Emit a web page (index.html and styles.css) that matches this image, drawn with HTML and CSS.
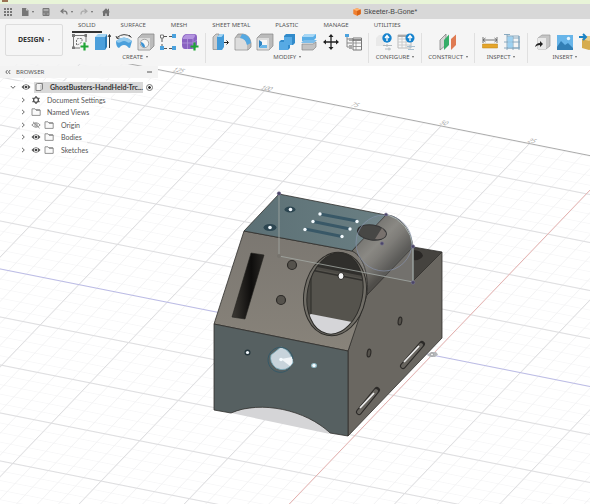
FILE: index.html
```html
<!DOCTYPE html>
<html lang="en">
<head>
  <meta charset="UTF-8">
  <meta name="viewport" content="width=device-width, initial-scale=1.0">
  <title>Skeeter-B-Gone*</title>
  <link rel="stylesheet" href="styles.css">
</head>
<body>
  <svg class="defs" aria-hidden="true">
    <symbol id="eye" viewBox="0 0 10 8">
      <path d="M.5 4Q5-1.500 9.500 4Q5 9.500 .5 4z" fill="#555"/>
      <circle cx="5" cy="4" r="2.200" fill="#eee"/>
      <circle cx="5" cy="4" r="1.300" fill="#444"/>
    </symbol>
    <symbol id="eye-off" viewBox="0 0 10 8">
      <path d="M.8 4Q5-.5 9.200 4Q5 8.500 .8 4zM2 .8L8.500 7.200" fill="none" stroke="#888" stroke-width=".9"/>
      <circle cx="5" cy="4" r="1.300" fill="none" stroke="#888" stroke-width=".8"/>
    </symbol>
    <symbol id="folder" viewBox="0 0 10 8">
      <path d="M1 7.400V.8H4L5 2H9.200V7.400z" fill="#fafafa" stroke="#888" stroke-width=".9"/>
      <path d="M5 2H9" stroke="#777"/>
    </symbol>
    <symbol id="chevron" viewBox="0 0 6 6">
      <path d="M2 .8L4.300 3L2 5.200" fill="none" stroke="#555" stroke-width=".9"/>
    </symbol>
  </svg>

  <div class="backdrop"></div>

  <header class="titlebar">
    <div class="quick">
      <button aria-label="Data panel"><svg viewBox="0 0 8 8"><path d="M1 0V8M4 0V8M7 0V8" stroke="#777" stroke-width="2" stroke-dasharray="2 1"/></svg></button>
      <button class="file" aria-label="File"><svg viewBox="0 0 8 8"><path d="M1 0H5L7.500 2.500V8H1z" fill="#777"/><path d="M5 0V2.500H7.500" fill="#ccc"/></svg><i class="caret"></i></button>
      <button class="save" aria-label="Save"><svg viewBox="0 0 8 8"><path d="M1 .5H7V7.500H1z" fill="#aaa" stroke="#777"/><path d="M1 4H7M2.500 6H5.500" stroke="#777" stroke-width="1.500"/></svg></button>
      <button class="undo" aria-label="Undo"><svg viewBox="0 0 8 8"><path d="M3.500 1L1 3.200L3.500 5.400M1 3.200H5Q7 3.500 7 6.500" fill="none" stroke="#777" stroke-width="1.200"/></svg><i class="caret"></i></button>
      <button class="redo" aria-label="Redo"><svg viewBox="0 0 8 8"><path d="M4.500 1L7 3.200L4.500 5.400M7 3.200H3Q1 3.500 1 6.500" fill="none" stroke="#aaa" stroke-width="1.200"/></svg><i class="caret"></i></button>
      <button class="home" aria-label="Home"><svg viewBox="0 0 8 8"><path d="M0 4.300L4 .3L8 4.300H7V8H1V4.300zM6 .8H7V3H6z" fill="#707070"/><path d="M3.300 5.500H4.700V8H3.300z" fill="#d4d4d4"/></svg></button>
    </div>
    <div class="doc">
      <svg viewBox="0 0 8 8"><path d="M.3 1.500L4 .2L7.700 1.500V6L4 7.800L.3 6z" fill="#f08030"/><path d="M.3 1.500L4 3L7.700 1.500L4 .2z" fill="#ffb470"/><path d="M4 3L7.700 1.500V6L4 7.800z" fill="#d96314"/></svg>
      <span>Skeeter-B-Gone*</span>
    </div>
  </header>

  <div class="toolbar">
    <button class="workspace">DESIGN <i class="caret"></i></button>
    <div class="ribbon">
      <nav class="tabs">
        <a href="#" class="active">SOLID</a>
        <a href="#">SURFACE</a>
        <a href="#">MESH</a>
        <a href="#">SHEET METAL</a>
        <a href="#">PLASTIC</a>
        <a href="#">MANAGE</a>
        <a href="#">UTILITIES</a>
      </nav>
      <div class="groups">
        <div class="group">
          <div class="tools">
            <button aria-label="Create sketch"><svg viewBox="0 0 18 18"><path d="M2 2.500H15M2.500 2V15M15 2V9M2 15H9" fill="none" stroke="#777"/><path d="M5.500 12V6.500L7 5.500H11V8Q10 11 5.500 12z" fill="none" stroke="#777" stroke-dasharray="2 1"/><path d="M1 1H4V4H1zM13.500 1H16V4H13.500zM1 13.500H4V16H1z" fill="#777"/><path d="M13.500 9.500V17.500M9.500 13.500H17.500" stroke="#20a535" stroke-width="2.200"/></svg></button>
            <button aria-label="Extrude"><svg viewBox="0 0 18 18"><path d="M2 4L5 1H14L12 4z" fill="#a5d5f3"/><path d="M2 4H12V17H2z" fill="#4c9fdb"/><path d="M12 4L14 1V14L12 17z" fill="#287bb8"/><path d="M16.500 15V2M15 4L16.500 1.500L18 4" fill="none" stroke="#333"/></svg></button>
            <button aria-label="Revolve"><svg viewBox="0 0 18 18"><path d="M1 8Q9 1 17 8L15 15Q13 15 12 13Q9 11 6 13L4 15Q1 14 1 8z" fill="#4ba0dc"/><path d="M1 8Q9 1 17 8Q14 11 12 9Q9 7 6 9Q3 11 1 8z" fill="#94cbee"/><path d="M2 4.500Q9-1 16 4" fill="none" stroke="#444"/><path d="M1 3L2 5.500L4.500 5M14 2L16.500 4.500" fill="none" stroke="#444"/></svg></button>
            <button aria-label="Hole"><svg viewBox="0 0 18 18"><path d="M1 5L5 1H17V13L13 17H1z" fill="#bbb" stroke="#888" stroke-width=".8"/><path d="M1.500 5H13V16.500H1.500z" fill="#ddd"/><circle cx="7.500" cy="10.500" r="4.200" fill="#f5f5f5" stroke="#888" stroke-width=".7"/><path d="M4 9Q8 10 8 14.500Q3.500 14 4 9z" fill="#3a92d4"/></svg></button>
            <button aria-label="Rectangular pattern"><svg viewBox="0 0 18 18"><path d="M4 3.500H14M3 5V14M4 15.500H14" stroke="#555" stroke-dasharray="4 2"/><path d="M1.500 2H4.500V5H1.500z" fill="#fff" stroke="#777"/><path d="M13 1H17V5H13zM1 13H5V17H1zM13 13H17V17H13z" fill="#4ba2de"/></svg></button>
            <button aria-label="Create form"><svg viewBox="0 0 18 18"><path d="M1 6Q2 1 6 1H13Q16 1 16 4V11Q16 15 12 16H4Q1 16 1 12z" fill="#8a63c2"/><path d="M2 5Q4 1 7 1.500H13Q15 2 13 5L12 6H2z" fill="#b394df"/><path d="M1 10H12V16M6.500 6V16M12 6V10L16 7" fill="none" stroke="#b59ddd" stroke-width=".7"/><path d="M13.500 9.500V17.500M9.500 13.500H17.500" stroke="#20a535" stroke-width="2.200"/></svg></button>
          </div>
          <button class="menu">CREATE <i class="caret"></i></button>
        </div>
        <div class="group">
          <div class="tools">
            <button aria-label="Press pull"><svg viewBox="0 0 18 18"><path d="M1 4L4 1H7V16.500H1z" fill="#ccc" stroke="#888" stroke-width=".7"/><path d="M5 4L8 1H12V14L10 17H5z" fill="#439bd9"/><path d="M5 4L8 1H12L9.500 4z" fill="#a3d4f3"/><path d="M12 9.500H16M14.500 7.500L16.500 9.500L14.500 11.500" fill="none" stroke="#222"/></svg></button>
            <button aria-label="Fillet"><svg viewBox="0 0 18 18"><path d="M1 5L4 1H9Q16 2 17 10V14L14 17H1z" fill="#bbb" stroke="#888" stroke-width=".7"/><path d="M1.500 5H7Q12 6 13 12V16.500H1.500z" fill="#ddd"/><path d="M8 1Q16 1.500 17 10L13 12Q12 6 6 5z" fill="#55a9e2"/></svg></button>
            <button aria-label="Shell"><svg viewBox="0 0 18 18"><path d="M1 5L5 1H17V13L13 17H1z" fill="#bbb" stroke="#888" stroke-width=".7"/><path d="M1.500 5H13V16.500H1.500z" fill="#ddd"/><path d="M3 7H11V15H3z" fill="#f6f6f6"/><path d="M3 7L6 9V12L3 15z" fill="#2f83c2"/><path d="M3 15L6 12H11V15z" fill="#68b6e9"/></svg></button>
            <button aria-label="Combine"><svg viewBox="0 0 18 18"><path d="M1 9L3 7H6V3L8 1H17V10L15 12H12V15L10 17H1z" fill="#328bcb"/><path d="M1 9H6V4H14V12H10V17H1z" fill="#57aae4"/></svg></button>
            <button aria-label="Split body"><svg viewBox="0 0 18 18"><path d="M2 4L5 1H16V5L13 8H2z" fill="#5aaee6"/><path d="M2 4L5 1H16L13 4z" fill="#a7d7f5"/><path d="M1 10L4 7H17L14 10z" fill="#7dbde9"/><path d="M2 11H13L16 9V14L13 17H2z" fill="#c2c2c2" stroke="#888" stroke-width=".7"/></svg></button>
            <button aria-label="Move"><svg viewBox="0 0 18 18"><path d="M9 2V16M2 9H16" stroke="#222" stroke-width="1.300"/><path d="M9 1L11.500 4H6.500zM9 17L6.500 14H11.500zM1 9L4 6.500V11.500zM17 9L14 11.500V6.500z" fill="#222"/></svg></button>
            <button aria-label="Parameters"><svg viewBox="0 0 18 18"><path d="M3 3V14H8M3 6H8M3 10H8" fill="none" stroke="#888"/><path d="M1 1H5V4H1z" fill="#4ba2de"/><path d="M5 5H9V8H5zM5 12H8V16H5z" fill="#aaa"/><path d="M9 5H17.500V17H9z" fill="#fafafa" stroke="#777"/><path d="M9 7H17" stroke="#666" stroke-width="1.500"/><path d="M9 10H17M9 13.500H17M12 7V17" stroke="#888" stroke-width=".8"/></svg></button>
          </div>
          <button class="menu">MODIFY <i class="caret"></i></button>
        </div>
        <div class="group">
          <div class="tools">
            <button aria-label="Configure"><svg viewBox="0 0 18 18"><path d="M1 5L4 2H10V13H1z" fill="#e9e9e9"/><circle cx="12" cy="5" r="4.700" fill="#1683ce"/><path d="M12 8V3M10 5L12 2.500L14 5" fill="none" stroke="#fff" stroke-width="1.300"/><path d="M8 12.500H17M10 16H16M12 11V14M14 14.500V17.500" stroke="#b0b8be"/></svg></button>
            <button aria-label="Configuration table"><svg viewBox="0 0 18 18"><path d="M1 2H14V15H1z" fill="#f7f7f7" stroke="#bbb"/><path d="M1 6H14M1 9H14M1 12H14M5 4V15M9 4V15" stroke="#ccc"/><path d="M1 2H12V4H1z" fill="#aaa"/><circle cx="13" cy="5" r="4.500" fill="#1683ce"/><path d="M13 8V3M11 5L13 2.500L15 5" fill="none" stroke="#fff" stroke-width="1.300"/><path d="M10 13.500H18M11 16.500H17M13 12V15" stroke="#a9c0d0"/></svg></button>
          </div>
          <button class="menu">CONFIGURE <i class="caret"></i></button>
        </div>
        <div class="group">
          <div class="tools">
            <button aria-label="Construct plane"><svg viewBox="0 0 18 18"><path d="M1 7L7 1V12L1 17z" fill="#d5d5d5" stroke="#777" stroke-width=".7"/><path d="M5 7L10 1.500V12L5 17z" fill="#36ad68"/><path d="M12 6L17 1.500V12L12 17z" fill="#df7b53"/></svg></button>
          </div>
          <button class="menu">CONSTRUCT <i class="caret"></i></button>
        </div>
        <div class="group">
          <div class="tools">
            <button aria-label="Measure"><svg viewBox="0 0 18 18"><path d="M2 4V10M16 4V10M2 7H16M4.500 5L2 7L4.500 9M13.500 5L16 7L13.500 9" fill="none" stroke="#666" stroke-width=".9"/><path d="M1.500 11H16.500V15H1.500z" fill="#e5a52b" stroke="#b98215" stroke-width=".5"/></svg></button>
            <button aria-label="Section analysis"><svg viewBox="0 0 18 18"><path d="M4 3H10V15H4z" fill="#b9def5"/><path d="M4 3H16V15H4M1 1.500H7M4 1V17M1 9H17M10 3V17M1 15H17M16 3V17M10 5H16" fill="none" stroke="#7fa3bb" stroke-width=".9"/><path d="M5 4H9.500V8.500H5zM5 9.500H9.500V14.500H5z" fill="#9ed1f1"/></svg></button>
          </div>
          <button class="menu">INSPECT <i class="caret"></i></button>
        </div>
        <div class="group">
          <div class="tools">
            <button aria-label="Insert derive"><svg viewBox="0 0 18 18"><path d="M4 5L8 2H16V13L12 16H4z" fill="#c5c5c5" stroke="#999" stroke-width=".7"/><path d="M4 5H12V16H4z" fill="#e9e9e9"/><path d="M1 14Q2 10 6 10V8L9 11L6 14V12Q3 12 1 14z" fill="#222"/></svg></button>
            <button aria-label="Insert image"><svg viewBox="0 0 18 18"><path d="M1 2H17V17H1z" fill="#68b5e9"/><path d="M1 14L5 8L9 12L12 10L17 15V17H1z" fill="#327fb5"/><circle cx="12.500" cy="5.500" r="1.700" fill="#e7f5ff"/></svg></button>
            <button aria-label="Insert component"><svg viewBox="0 0 18 18"><path d="M4 6L10 3L18 5V15L11 17L4 15z" fill="#d6ac4f"/><path d="M4 6L11 8L18 5L10 3z" fill="#ecd08c"/><path d="M1 4H7M5 1L8 4L5 7" fill="none" stroke="#1b83c6" stroke-width="2"/></svg></button>
          </div>
          <button class="menu">INSERT <i class="caret"></i></button>
        </div>
      </div>
    </div>
  </div>

  <main class="canvas">
    <svg class="scene" viewBox="0 64 590 440" preserveAspectRatio="xMinYMin slice" role="img" aria-label="3D model on the work plane">
      <defs>
        <pattern id="minor" width="20" height="20" patternUnits="userSpaceOnUse">
          <path d="M0 0H20M0 0V20" stroke="#efeff1" stroke-width="1.600" fill="none"/>
        </pattern>
        <linearGradient id="tube" gradientUnits="userSpaceOnUse" x1="360" y1="232" x2="393" y2="264">
          <stop offset="0" stop-color="#66645f"/>
          <stop offset=".45" stop-color="#85827b"/>
          <stop offset=".65" stop-color="#77746e"/>
          <stop offset="1" stop-color="#4f4d49"/>
        </linearGradient>
        <linearGradient id="front" x1="0" y1="0" x2="0" y2="1">
          <stop offset="0" stop-color="#7b7771"/>
          <stop offset="1" stop-color="#88837a"/>
        </linearGradient>
        <linearGradient id="slot" x1="0" y1="0" x2="1" y2="0">
          <stop offset="0" stop-color="#3c3934"/>
          <stop offset=".6" stop-color="#0e0d0c"/>
          <stop offset="1" stop-color="#2a2825"/>
        </linearGradient>
        <linearGradient id="top" x1="0" y1="0" x2="1" y2="0">
          <stop offset="0" stop-color="#5c7075"/>
          <stop offset="1" stop-color="#6a7f83"/>
        </linearGradient>
        <clipPath id="bore"><ellipse cx="335" cy="293.500" rx="27.500" ry="41" transform="rotate(11 335 293.500)"/></clipPath>
      </defs>

      <!-- work plane, one major cell is 100 x 100 -->
      <g transform="matrix(.883 .176 -.386 .403 432 355)">
        <path d="M-1000-481H1000V900H-1000z" fill="url(#minor)"/>
        <path class="major" d="M-1000-400H1000M-1000-300H1000M-1000-200H1000M-1000-100H1000M-1000 100H1000M-1000 200H1000M-1000 300H1000M-1000 400H1000M-1000 500H1000M-1000 600H1000M-700-481V900M-600-481V900M-500-481V900M-400-481V900M-300-481V900M-200-481V900M-100-481V900M100-481V900M200-481V900M300-481V900M400-481V900"/>
        <path class="edge" d="M-1000-481H1000"/>
        <path class="axis-blue" d="M-1000 0H1000"/>
        <path class="axis-red" d="M0-481V900"/>
      </g>
      <g class="ticks">
        <text transform="translate(172 71) rotate(11) skewX(-35)">125</text>
        <text transform="translate(260 89) rotate(11) skewX(-35)">100</text>
        <text transform="translate(350 106) rotate(11) skewX(-35)">75</text>
        <text transform="translate(439 124) rotate(11) skewX(-35)">50</text>
        <text transform="translate(527 142) rotate(11) skewX(-35)">25</text>
      </g>

      <!-- body -->
      <path d="M231 413L330 434L310 416L262 405z" fill="#d5d5d7"/>
      <g class="faces">
        <path d="M413 247L442 252L413 282z" fill="#45433f"/>
        <path d="M348 351L366 294L413 247V281L442 252V338L348 436z" fill="#6a6761"/>
        <path d="M244 231L352 251C364 256 369 276 367 295L348 351L214 324z" fill="url(#front)"/>
        <path d="M214 324L348 351V436L330 433C306 410 261 400 231 413L214 410z" fill="#566061"/>
        <path d="M279 194L386 215L352 251L244 231z" fill="url(#top)"/>
        <path d="M386 215C399 215 411 229 413 247L367 295C369 276 364 256 352 251z" fill="url(#tube)"/>
      </g>

      <!-- bore -->
      <ellipse cx="335" cy="294" rx="31" ry="42" transform="rotate(11 335 294)" fill="#716e67" stroke="#2d2c29"/>
      <g clip-path="url(#bore)">
        <path d="M300 250H370V340H300z" fill="#4c4a45"/>
        <path d="M305 250H370V277L318 266L305 280z" fill="#302f2c"/>
        <path d="M311 268L366 279V330L311 314z" fill="#55534d"/>
        <path d="M311 270L366 281M311 265L366 276" stroke="#302f2c" stroke-width="1.500"/>
        <path d="M311 265V314" stroke="#2d2c29"/>
        <path d="M300 320L311 314L352 322L342 345H300z" fill="#d5d5d8"/>
        <ellipse cx="341" cy="276" rx="3" ry="3.500" fill="#f5f5f5" stroke="#292825"/>
      </g>
      <ellipse cx="335" cy="293.500" rx="27.500" ry="41" transform="rotate(11 335 293.500)" fill="none" stroke="#2d2c29"/>

      <!-- slots and holes -->
      <path d="M251 253L264 255L245 319L232 317z" fill="url(#slot)" stroke="#22211e" stroke-width=".6"/>
      <g fill="#55524c" stroke="#2d2b28" stroke-width="1.200">
        <circle cx="292" cy="265" r="4.500"/>
        <circle cx="281" cy="300" r="4.500"/>
        <ellipse cx="400" cy="321" rx="1.800" ry="4" transform="rotate(8 400 321)"/>
        <ellipse cx="369" cy="353" rx="1.800" ry="4" transform="rotate(8 369 353)"/>
      </g>
      <path d="M403 366L422 344M359 412L377 390" stroke="#2c2a28" stroke-width="6" stroke-linecap="round"/>
      <path d="M403 366L421 345M359 412L376 391" stroke="#67645e" stroke-width="4" stroke-linecap="round"/>
      <path d="M404 362L419 346M360 408L374 393" stroke="#eee" stroke-width="1.700"/>
      <ellipse cx="372" cy="232.500" rx="14.500" ry="7.500" transform="rotate(8 372 232.500)" fill="#383633" stroke="#222"/>
      <path d="M375 239Q386 240 386 233L382 228z" fill="#706761"/>
      <path d="M413 250Q422 250 423 256Q420 261 413 260z" fill="#292725"/>
      <g fill="#2d4651">
        <ellipse cx="290" cy="209.500" rx="5.500" ry="3"/>
        <ellipse cx="270" cy="227.500" rx="6.500" ry="3.500"/>
      </g>
      <path d="M320 214L357 221M313 221.500L350 229M305 229L342 236.500" stroke="#395867" stroke-width="3"/>
      <path d="M271 355L281 347Q292 351 293 363Q286 373 276 368Q269 362 271 355z" fill="#c7d3db" stroke="#75a8b9" stroke-width=".8"/>
      <path d="M281 359L292 357Q294 362 290 366z" fill="#f1f5f8"/>
      <path d="M293 359A12.500 12.500 0 1 0 290 368" fill="none" stroke="#365967"/>
      <circle cx="247.500" cy="352.500" r="3" fill="#25363c"/>
      <ellipse cx="314" cy="365.500" rx="3" ry="2.500" fill="#8fb9c5"/>

      <!-- sketch -->
      <path d="M279 194V256L413 282V247" class="sketch"/>
      <path d="M386 215Q411 221 413 247V282L365 273Q356 258 356 235Q362 217 386 215z" fill="#b4bdc4" opacity=".13"/>
      <circle cx="384" cy="243" r="28" fill="none" stroke="#8995b1" stroke-width=".8" opacity=".75"/>
      <path d="M386 214Q410 222 413 247V282" fill="none" stroke="#a9b4b2" stroke-width=".9"/>
      <g class="points">
        <circle cx="290.500" cy="209.500" r="1.800"/><circle cx="270" cy="227.500" r="1.800"/>
        <circle cx="320" cy="214" r="1.700"/><circle cx="357" cy="221.500" r="1.700"/>
        <circle cx="313" cy="221.500" r="1.700"/><circle cx="350" cy="229" r="1.700"/>
        <circle cx="305" cy="229.500" r="1.700"/><circle cx="342" cy="236.500" r="1.700"/>
        <circle cx="247.500" cy="352.500" r="1.600"/><circle cx="281" cy="359.500" r="1.800"/><circle cx="314" cy="365.500" r="1.700"/>
      </g>
      <g fill="#4b4568" stroke="#777391" stroke-width=".6">
        <circle cx="279" cy="193.500" r="1.800"/><circle cx="382" cy="243.500" r="1.700"/><circle cx="386" cy="214.500" r="1.500"/>
        <circle cx="413" cy="246.500" r="1.700"/><circle cx="413" cy="282.500" r="1.800"/>
      </g>
      <circle cx="279" cy="256" r="2" fill="#77736d"/>
      <path d="M427 355L431 352H436L438 354.500L435 357H430z" fill="#b5b7ba"/>
      <circle cx="432" cy="354.500" r="1.500" fill="#eee" stroke="#888" stroke-width=".6"/>
    </svg>

    <aside class="browser">
      <div class="browser-head">
        <svg class="collapse" viewBox="0 0 6 6"><path d="M2.500 1L.8 3L2.500 5M5.200 1L3.500 3L5.200 5" fill="none" stroke="#555" stroke-width=".9"/></svg>
        <span>BROWSER</span>
        <button aria-label="Minimize"><svg viewBox="0 0 6 6"><path d="M0 3H5" stroke="#555"/></svg></button>
      </div>
      <ul class="tree">
        <li class="root">
          <svg class="chev open"><use href="#chevron"/></svg>
          <svg class="ico"><use href="#eye"/></svg>
          <div class="component">
            <svg class="ico" viewBox="0 0 10 8"><path d="M2 2Q2 .5 3.500 .5H8.500V6L7 7.500H2z" fill="#f3f3f3" stroke="#777" stroke-width=".9"/><path d="M7 7V2.500L8.500 .8" fill="none" stroke="#999" stroke-width=".7"/></svg>
            <span>GhostBusters-HandHeld-Trc...</span>
          </div>
          <input type="radio" name="activeComponent" aria-label="Activate component" checked>
        </li>
        <li>
          <svg class="chev"><use href="#chevron"/></svg>
          <svg class="ico" viewBox="0 0 10 8"><circle cx="5" cy="4" r="2.400" fill="none" stroke="#555" stroke-width="1.300"/><path d="M5 0V1.500M5 6.500V8M1.500 2L3 3M7 5L8.500 6M1.500 6L3 5M7 3L8.500 2" stroke="#555" stroke-width="1.400"/></svg>
          <span class="wide">Document Settings</span>
        </li>
        <li>
          <svg class="chev"><use href="#chevron"/></svg>
          <svg class="ico"><use href="#folder"/></svg>
          <span class="wide">Named Views</span>
        </li>
        <li>
          <svg class="chev"><use href="#chevron"/></svg>
          <svg class="ico"><use href="#eye-off"/></svg>
          <svg class="ico"><use href="#folder"/></svg>
          <span>Origin</span>
        </li>
        <li>
          <svg class="chev"><use href="#chevron"/></svg>
          <svg class="ico"><use href="#eye"/></svg>
          <svg class="ico"><use href="#folder"/></svg>
          <span>Bodies</span>
        </li>
        <li>
          <svg class="chev"><use href="#chevron"/></svg>
          <svg class="ico"><use href="#eye"/></svg>
          <svg class="ico"><use href="#folder"/></svg>
          <span>Sketches</span>
        </li>
      </ul>
    </aside>
  </main>
</body>
</html>
```
FILE: styles.css
```css
* {
  box-sizing: border-box;
}
body {
  margin: 0;
  min-height: 100vh;
  display: flex;
  flex-direction: column;
  font-family: Lato, "Noto Sans", sans-serif;
  font-size: 7px;
  line-height: 12px;
  color: #555;
  background-color: #fff;
}
button {
  padding: 0;
  border: none;
  background: none;
  font: inherit;
  color: inherit;
  cursor: pointer;
}
.defs {
  position: absolute;
  width: 0;
  height: 0;
}
.caret {
  display: inline-block;
  border: 1px solid transparent;
  border-top: 2px solid #666;
  border-bottom: none;
  margin-left: 1px;
  vertical-align: middle;
}

/* title bar */
.backdrop {
  height: 4px;
  background: linear-gradient(90deg, transparent 2px, #9b7355 2px, #9b7355 8px, transparent 8px) #e8f4d8;
  background-size: 100% 2px;
  background-repeat: no-repeat;
}
.titlebar {
  position: relative;
  height: 15px;
  display: flex;
  align-items: center;
  justify-content: center;
  background-color: #d8d8d8;
}
.quick {
  position: absolute;
  left: 4px;
  top: 3px;
  display: flex;
  height: 9px;
}
.quick button {
  display: flex;
  align-items: center;
  gap: 2px;
  width: 17px;
}
.quick .file {
  width: 21px;
}
.quick .save {
  width: 18px;
}
.quick .undo,
.quick .redo {
  width: 20px;
}
.quick .home {
  margin-left: 2px;
}
.quick svg,
.doc svg {
  width: 8px;
  height: 8px;
}
.doc {
  display: flex;
  align-items: center;
  gap: 3px;
  padding-left: 180px;
  padding-top: 1px;
  font-family: "Liberation Sans", Arial, sans-serif;
  color: #444;
}

/* toolbar */
.toolbar {
  display: flex;
  height: 47px;
  background-color: #f5f5f5;
  overflow: hidden;
}
.workspace {
  flex: none;
  width: 58px;
  height: 32px;
  margin: 5px 6px 0 5px;
  border: 1px solid #ddd;
  border-radius: 2px;
  font-family: "Noto Sans", sans-serif;
  font-weight: bold;
  color: #333;
}
.workspace .caret {
  margin-left: 2px;
}
.ribbon {
  flex: 1;
  min-width: 0;
  font-family: "Noto Sans", sans-serif;
  font-size: 6px;
}
.tabs {
  display: flex;
  gap: 13px;
  height: 14px;
  padding-left: 3px;
}
.tabs a {
  padding: 0 6px;
  color: #555;
  text-decoration: none;
}
.tabs .active {
  border-bottom: 2px solid #333;
}
.groups {
  display: flex;
}
.group {
  flex: none;
  display: flex;
  flex-direction: column;
  align-items: center;
  padding: 0 4px;
  border-right: 1px solid #e0e0e0;
}
.group:first-child {
  padding-left: 0;
}
.group:last-child {
  border-right: none;
}
.tools {
  display: flex;
}
.tools button {
  display: flex;
  justify-content: center;
  width: 22px;
}
.tools svg {
  width: 18px;
  height: 18px;
}
.menu {
  min-width: 44px;
  height: 12px;
  color: #555;
  white-space: nowrap;
}

/* canvas */
.canvas {
  position: relative;
  flex: 1;
  margin-top: -2px;
  overflow: hidden;
}
.scene {
  position: absolute;
  width: 100%;
  height: 100%;
}
.major,
.edge,
.axis-blue,
.axis-red {
  fill: none;
  vector-effect: non-scaling-stroke;
  stroke-width: 1px;
}
.major {
  stroke: #dedee0;
}
.edge {
  stroke: #aaa;
}
.axis-blue {
  stroke: #bbbbe6;
}
.axis-red {
  stroke: #e5b0ae;
}
.ticks {
  font-size: 6px;
  fill: #999;
}
.faces path {
  stroke: #302f2c;
  stroke-width: 0.8px;
  stroke-linejoin: round;
}
.sketch {
  fill: none;
  stroke: #a3aaa5;
  stroke-width: 0.8px;
}
.points {
  fill: #f5fbff;
}

/* browser panel */
.browser {
  position: absolute;
  left: 0;
  top: 2px;
  width: 158px;
}
.browser-head {
  display: flex;
  align-items: center;
  height: 12px;
  padding: 0 5px;
  background-color: #f3f3f3;
}
.browser-head span {
  flex: 1;
  margin-left: 5px;
  font-family: "Noto Sans", sans-serif;
  font-size: 6px;
}
.browser-head svg {
  display: block;
  width: 6px;
  height: 6px;
}
.tree {
  display: grid;
  grid-auto-rows: 1fr;
  height: 75px;
  margin: 3px 0 0;
  padding: 0 0 0 20px;
  list-style: none;
}
.tree li {
  display: flex;
  align-items: center;
  gap: 3px;
  width: max-content;
  padding-right: 5px;
  background-color: rgba(255, 255, 255, 0.7);
}
.tree .root {
  margin-left: -10px;
  padding-right: 0;
}
.chev {
  width: 6px;
  height: 6px;
  margin-right: 2px;
}
.chev.open {
  transform: rotate(90deg);
}
.ico {
  width: 10px;
  height: 8px;
}
.tree span {
  margin-left: 4px;
}
.tree .wide {
  margin-left: 3px;
}
.component {
  display: flex;
  align-items: center;
  height: 11px;
  background-color: #d9d9d9;
  font-weight: bold;
  color: #333;
}
.tree .component span {
  margin-left: 6px;
}
.tree input {
  appearance: none;
  width: 7px;
  height: 7px;
  margin: 0;
  border: 1px solid #777;
  border-radius: 50%;
  background: radial-gradient(#333 30%, #fff 45%);
}
```
